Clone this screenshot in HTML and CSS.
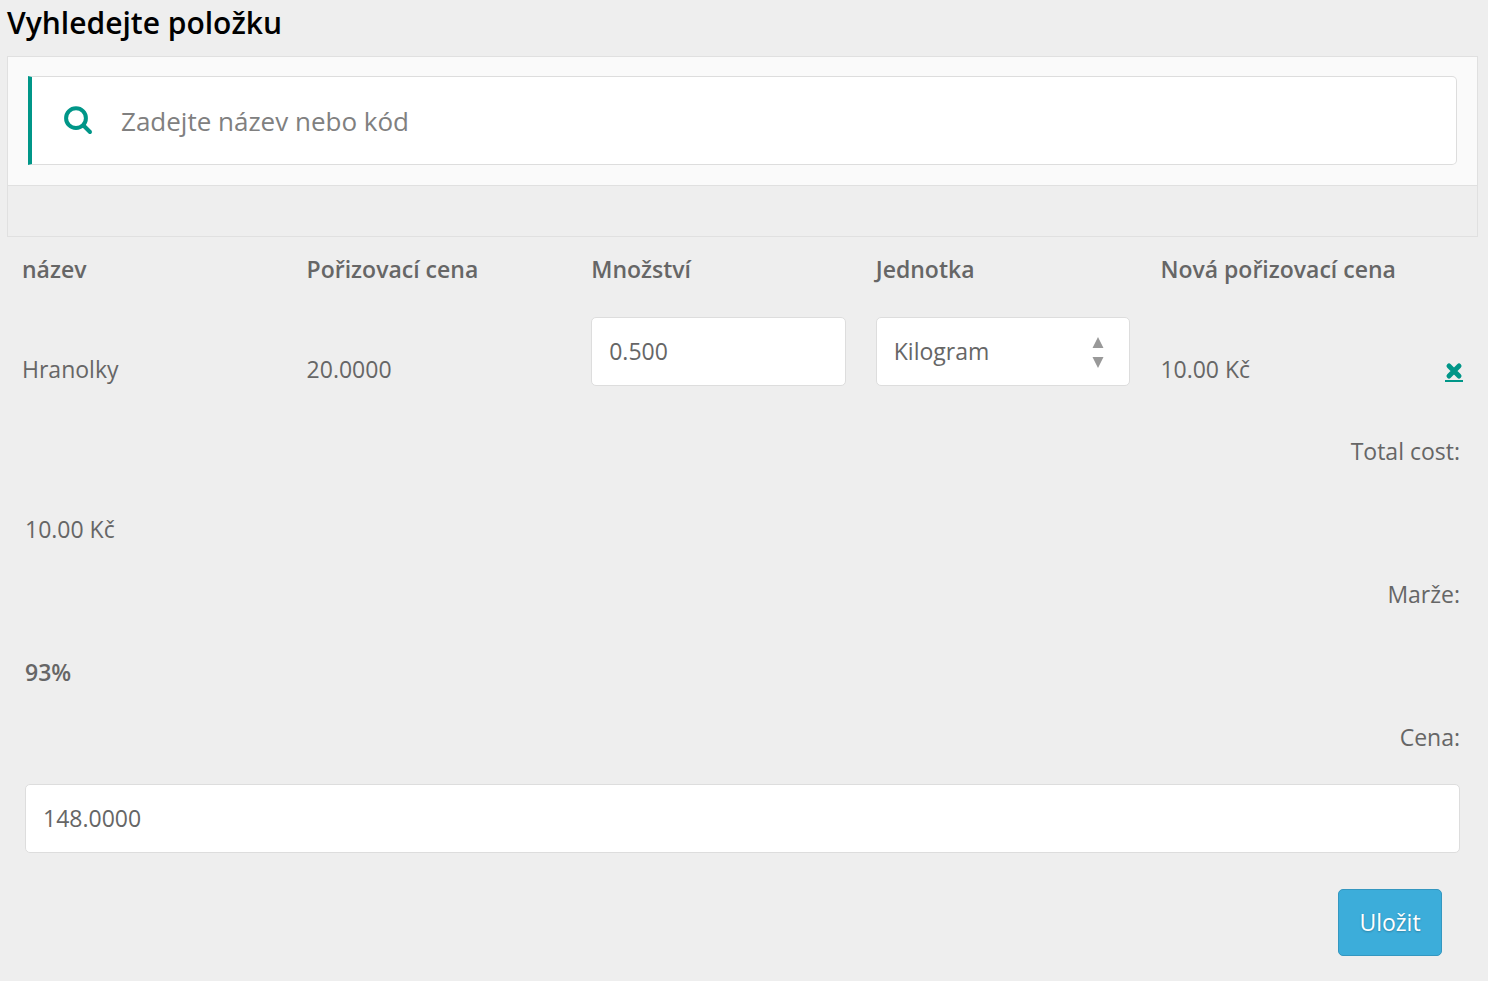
FILE: index.html
```html
<!DOCTYPE html>
<html lang="cs">
<head>
<meta charset="utf-8">
<meta name="viewport" content="width=device-width, initial-scale=1">
<title>Vyhledejte položku</title>
<link rel="stylesheet" href="styles.css">
</head>
<body>
<main class="page">
  <h1 class="title">Vyhledejte položku</h1>
  <section class="search-panel">
    <div class="search-area">
      <label class="search-box">
        <svg class="search-icon" viewBox="0 0 28 28" aria-hidden="true"><circle cx="12" cy="11.200" r="9.900"/><path d="M19.500 18.500 26 25"/></svg>
        <input class="search-input" type="search" placeholder="Zadejte název nebo kód" aria-label="Vyhledejte položku">
      </label>
    </div>
    <div class="results"></div>
  </section>
  <form>
    <table class="items">
      <thead>
        <tr>
          <th>název</th><th>Pořizovací cena</th><th>Množství</th><th>Jednotka</th><th>Nová pořizovací cena</th><td class="action"></td>
        </tr>
      </thead>
      <tbody>
        <tr>
          <td>Hranolky</td>
          <td>20.0000</td>
          <td><input class="control" type="text" value="0.500" aria-label="Množství"></td>
          <td>
            <div class="select-wrap">
              <select class="control" aria-label="Jednotka"><option>Kilogram</option></select>
              <svg class="arrows" viewBox="0 0 12 32" aria-hidden="true"><path d="M6 1 11.500 12H.5zM6 32 .5 21h11z"/></svg>
            </div>
          </td>
          <td>10.00 Kč</td>
          <td class="action">
            <a class="remove" href="#" aria-label="Odstranit"><svg class="remove-icon" viewBox="0 0 18 18" aria-hidden="true"><path d="m4 4 10 10M14 4 4 14"/></svg></a>
          </td>
        </tr>
      </tbody>
    </table>
    <div class="summary">
      <div class="label">Total cost:</div>
      <div class="value">10.00 Kč</div>
      <div class="label">Marže:</div>
      <div class="value strong">93%</div>
      <label class="label" for="price">Cena:</label>
      <input class="control price" id="price" type="text" value="148.0000">
      <div class="actions"><button class="save" type="submit">Uložit</button></div>
    </div>
  </form>
</main>
</body>
</html>
```
FILE: styles.css
```css
* { box-sizing: border-box; }
body {
  margin: 0;
  background: #eee;
  color: #666;
  font-family: "Open Sans", "Noto Sans", sans-serif;
  font-size: 23px;
  line-height: 34px;
}
input, select, button { font: inherit; color: inherit; }
.page { padding: 0 10px 24px 7px; }
.title {
  margin: 0;
  padding: 2px 0 12px;
  color: #000;
  font-size: 30px;
  font-weight: 600;
  line-height: 42px;
}
.search-panel { border: 1px solid #e0e0e0; }
.search-area {
  padding: 19px 20px 20px;
  background: #fafafa;
  border-bottom: 1px solid #e0e0e0;
}
.search-box {
  display: flex;
  align-items: center;
  gap: 29px;
  height: 89px;
  padding: 0 32px;
  background: #fff;
  border: 1px solid #ddd;
  border-left: 4px solid #009688;
  border-radius: 0 5px 5px 0;
}
.search-icon {
  flex: none;
  width: 28px;
  height: 28px;
  overflow: visible;
  fill: none;
  stroke: #009688;
  stroke-width: 4;
  stroke-linecap: round;
}
.search-input {
  flex: 1;
  min-width: 0;
  padding: 0;
  border: 0;
  outline: 0;
  background: none;
  appearance: none;
  font-size: 26px;
  line-height: 40px;
}
.search-input::placeholder { color: #808080; opacity: 1; }
.results { height: 50px; }
.items {
  width: 100%;
  table-layout: fixed;
  border-collapse: collapse;
}
.items th, .items td {
  padding: 15px 15px 13px;
  text-align: left;
  vertical-align: middle;
}
.items th { height: 65px; padding: 14px 15px 16px; font-weight: 600; }
.items .action { width: 48px; }
.items .control { margin-bottom: 35px; }
.control {
  display: block;
  width: 100%;
  height: 69px;
  padding: 0 17px 2px;
  background: #fff;
  border: 1px solid #ddd;
  border-radius: 5px;
  appearance: none;
}
.select-wrap { position: relative; }
.arrows {
  position: absolute;
  top: 19px;
  right: 26px;
  width: 12px;
  height: 32px;
  fill: #999;
  pointer-events: none;
}
.remove {
  display: block;
  width: 18px;
  padding-top: 5px;
  border-bottom: 2px solid #009688;
}
.remove-icon {
  display: block;
  width: 18px;
  height: 18px;
  fill: none;
  stroke: #009688;
  stroke-width: 5;
  stroke-linecap: round;
}
.summary { padding: 0 18px; }
.label { display: block; text-align: right; }
.value { padding: 44px 0 31px; }
.strong { font-weight: 600; }
.price { margin-top: 30px; }
.actions {
  display: flex;
  justify-content: flex-end;
  padding: 36px 18px 0;
}
.save {
  min-width: 104px;
  height: 67px;
  padding: 0 20px 2px;
  background: #3cadda;
  border: 1px solid #3497c0;
  border-radius: 5px;
  color: #fff;
  text-shadow: 0 1px 2px rgba(0, 0, 0, .25);
}
```
